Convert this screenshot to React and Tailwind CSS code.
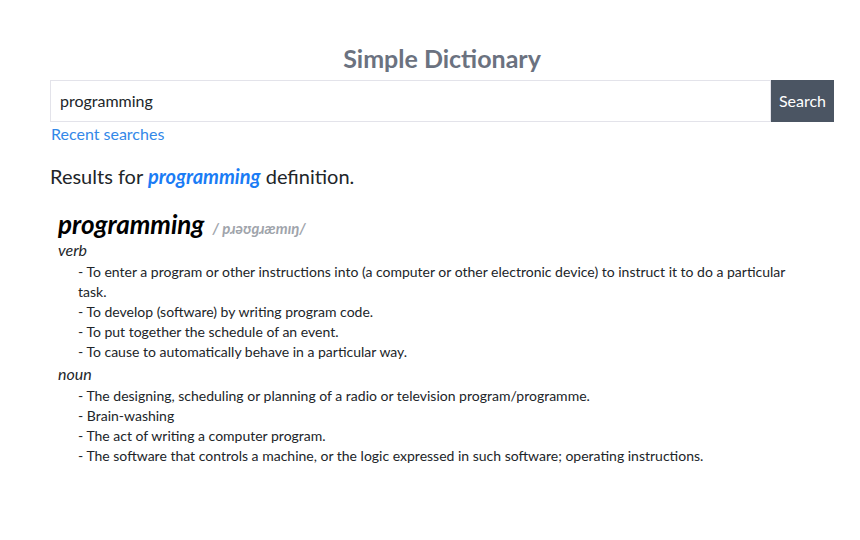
const verbDefs = [
  "To enter a program or other instructions into (a computer or other electronic device) to instruct it to do a particular task.",
  "To develop (software) by writing program code.",
  "To put together the schedule of an event.",
  "To cause to automatically behave in a particular way.",
];

const nounDefs = [
  "The designing, scheduling or planning of a radio or television program/programme.",
  "Brain-washing",
  "The act of writing a computer program.",
  "The software that controls a machine, or the logic expressed in such software; operating instructions.",
];

function DefList({ items }) {
  return (
    <ul className="pl-[20px] pr-[30px] text-[14px] leading-[20px]">
      {items.map((d, i) => (
        <li key={i}>- {d}</li>
      ))}
    </ul>
  );
}

export default function App() {
  return (
    <div className="min-h-[540px] bg-white text-[#212529] font-['Lato',sans-serif]">
      <div className="ml-[50px] w-[784px] pt-[42px]">
        <h1 className="text-center text-[25px] leading-[32px] font-bold text-[#6b7280]">
          Simple Dictionary
        </h1>

        {/* search bar */}
        <div className="mt-[6px] flex h-[42px]">
          <input
            className="flex-1 border border-[#e3e3ea] px-[9px] text-[16px] text-[#212529] outline-none"
            defaultValue="programming"
          />
          <button className="w-[63px] bg-[#4b5563] text-[16px] text-white">Search</button>
        </div>

        <a href="#" className="block text-[16px] leading-[24px] text-[#3388e8] pl-[1px]">
          Recent searches
        </a>

        <p className="mt-[16px] text-[20px] leading-[28px]">
          Results for <span className="font-bold italic text-[#1a7cf5]">programming</span> definition.
        </p>

        {/* result */}
        <div className="mt-[18px] pl-[8px]">
          <div className="flex items-baseline gap-[8px] h-[32px]">
            <span className="text-[26px] leading-[32px] font-bold italic text-black">programming</span>
            <span className="text-[15px] font-bold italic text-[#a0a4ab]">/ pɹəʊɡɹæmɪŋ/</span>
          </div>

          <div className="mb-[2px] text-[16px] leading-[20px] italic">verb</div>
          <DefList items={verbDefs} />

          <div className="mt-[2px] mb-[2px] text-[16px] leading-[20px] italic">noun</div>
          <DefList items={nounDefs} />
        </div>
      </div>
    </div>
  );
}
